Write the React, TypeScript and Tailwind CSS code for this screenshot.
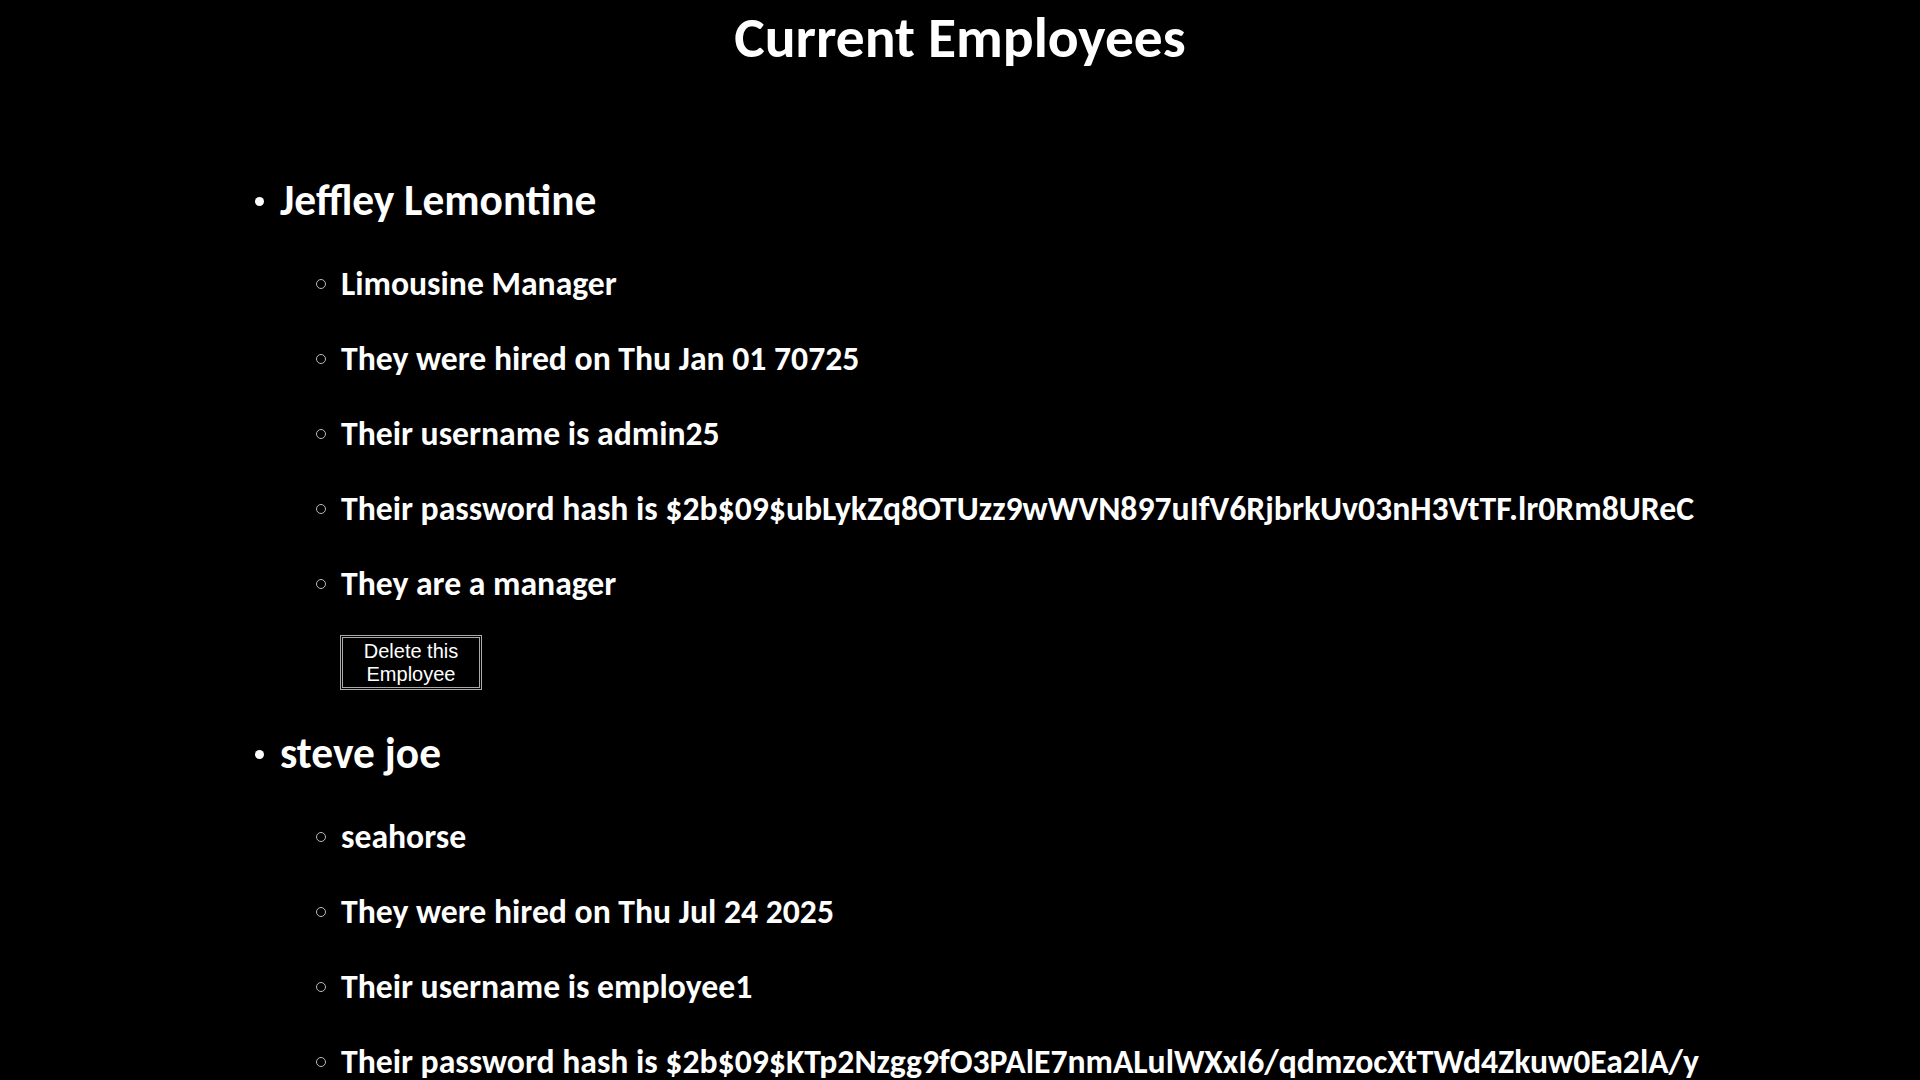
const employees = [
  {
    name: "Jeffley Lemontine",
    role: "Limousine Manager",
    hired: "Thu Jan 01 70725",
    username: "admin25",
    hash: "$2b$09$ubLykZq8OTUzz9wWVN897uIfV6RjbrkUv03nH3VtTF.lr0Rm8UReC",
    manager: true,
  },
  {
    name: "steve joe",
    role: "seahorse",
    hired: "Thu Jul 24 2025",
    username: "employee1",
    hash: "$2b$09$KTp2Nzgg9fO3PAlE7nmALulWXxI6/qdmzocXtTWd4Zkuw0Ea2lA/y",
    manager: false,
  },
];

function SubItem({ children, first }: { children: React.ReactNode; first?: boolean }) {
  return (
    <li className={`flex items-center h-[40px] ${first ? "mt-[37px]" : "mt-[35px]"}`}>
      <span className="ml-[316px] w-[10px] h-[10px] rounded-full border border-[#bbb] shrink-0" />
      <span className="ml-[15px] text-[33.7px] leading-[40px] font-bold whitespace-nowrap">{children}</span>
    </li>
  );
}

export default function App() {
  return (
    <div
      className="min-h-screen bg-black text-white"
      style={{ fontFamily: "Carlito, Calibri, Lato, 'Open Sans', sans-serif" }}
    >
      <h1 className="text-center text-[57.5px] leading-[68px] font-bold pt-[3px]">Current Employees</h1>
      <ul className="pt-[104px]">
        {employees.map((e, i) => (
          <li key={e.username} className={i > 0 ? "mt-[38px]" : ""}>
            <div className="flex items-center h-[52px]">
              <span className="ml-[255px] w-[9px] h-[9px] rounded-full bg-white shrink-0" />
              <span className="ml-[16px] text-[43.4px] leading-[52px] font-bold">{e.name}</span>
            </div>
            <ul>
              <SubItem first>{e.role}</SubItem>
              <SubItem>They were hired on {e.hired}</SubItem>
              <SubItem>Their username is {e.username}</SubItem>
              <SubItem>Their password hash is {e.hash}</SubItem>
              {e.manager && <SubItem>They are a manager</SubItem>}
            </ul>
            {e.manager && (
              <button
                className="mt-[31px] ml-[340px] w-[142px] h-[55px] border-[3px] border-double border-[#aaa] bg-black text-white text-[20px] leading-[23px] px-2"
                style={{ fontFamily: "'Liberation Sans', Arial, sans-serif" }}
              >
                Delete this Employee
              </button>
            )}
          </li>
        ))}
      </ul>
    </div>
  );
}
